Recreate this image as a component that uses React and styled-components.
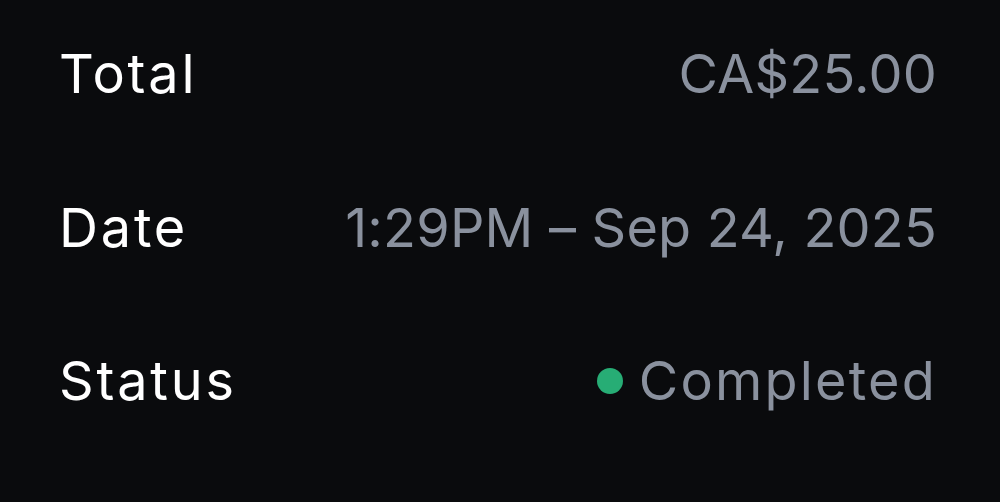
import React from 'react';
import styled, { createGlobalStyle } from 'styled-components';

const GlobalStyle = createGlobalStyle`
  html, body {
    margin: 0;
    padding: 0;
    background: #0a0b0d;
  }
  body {
    font-family: Inter, "Noto Sans", sans-serif;
    -webkit-font-smoothing: antialiased;
  }
`;

const StyledDetails = styled.div`
  width: 1000px;
  height: 502px;
  box-sizing: border-box;
  padding: 0 63px 0 59px;
  display: flex;
  flex-direction: column;
`;

const StyledRow = styled.div`
  height: 153.5px;
  display: flex;
  align-items: center;
  justify-content: space-between;
  margin-top: ${({ $first }) => ($first ? '-3px' : '0')};
`;

const StyledLabel = styled.span`
  color: #ffffff;
  font-size: 54px;
  font-weight: 400;
  letter-spacing: 2.8px;
`;

const StyledValue = styled.span`
  color: #8a919e;
  font-size: 54px;
  font-weight: 400;
  letter-spacing: ${({ $wide }) => ($wide ? '2.2px' : '0.2px')};
  display: flex;
  align-items: center;
`;

const StatusDot = styled.span`
  width: 26px;
  height: 26px;
  border-radius: 50%;
  background: #27ad75;
  margin-right: 16px;
`;

const rows = [
  { label: 'Total', value: 'CA$25.00' },
  { label: 'Date', value: '1:29PM – Sep 24, 2025' },
  { label: 'Status', value: 'Completed', dot: true },
];

export default function App() {
  return (
    <>
      <GlobalStyle />
      <StyledDetails>
        {rows.map((row, i) => (
          <StyledRow key={row.label} $first={i === 0}>
            <StyledLabel>{row.label}</StyledLabel>
            <StyledValue $wide={row.dot}>
              {row.dot && <StatusDot />}
              {row.value}
            </StyledValue>
          </StyledRow>
        ))}
      </StyledDetails>
    </>
  );
}
